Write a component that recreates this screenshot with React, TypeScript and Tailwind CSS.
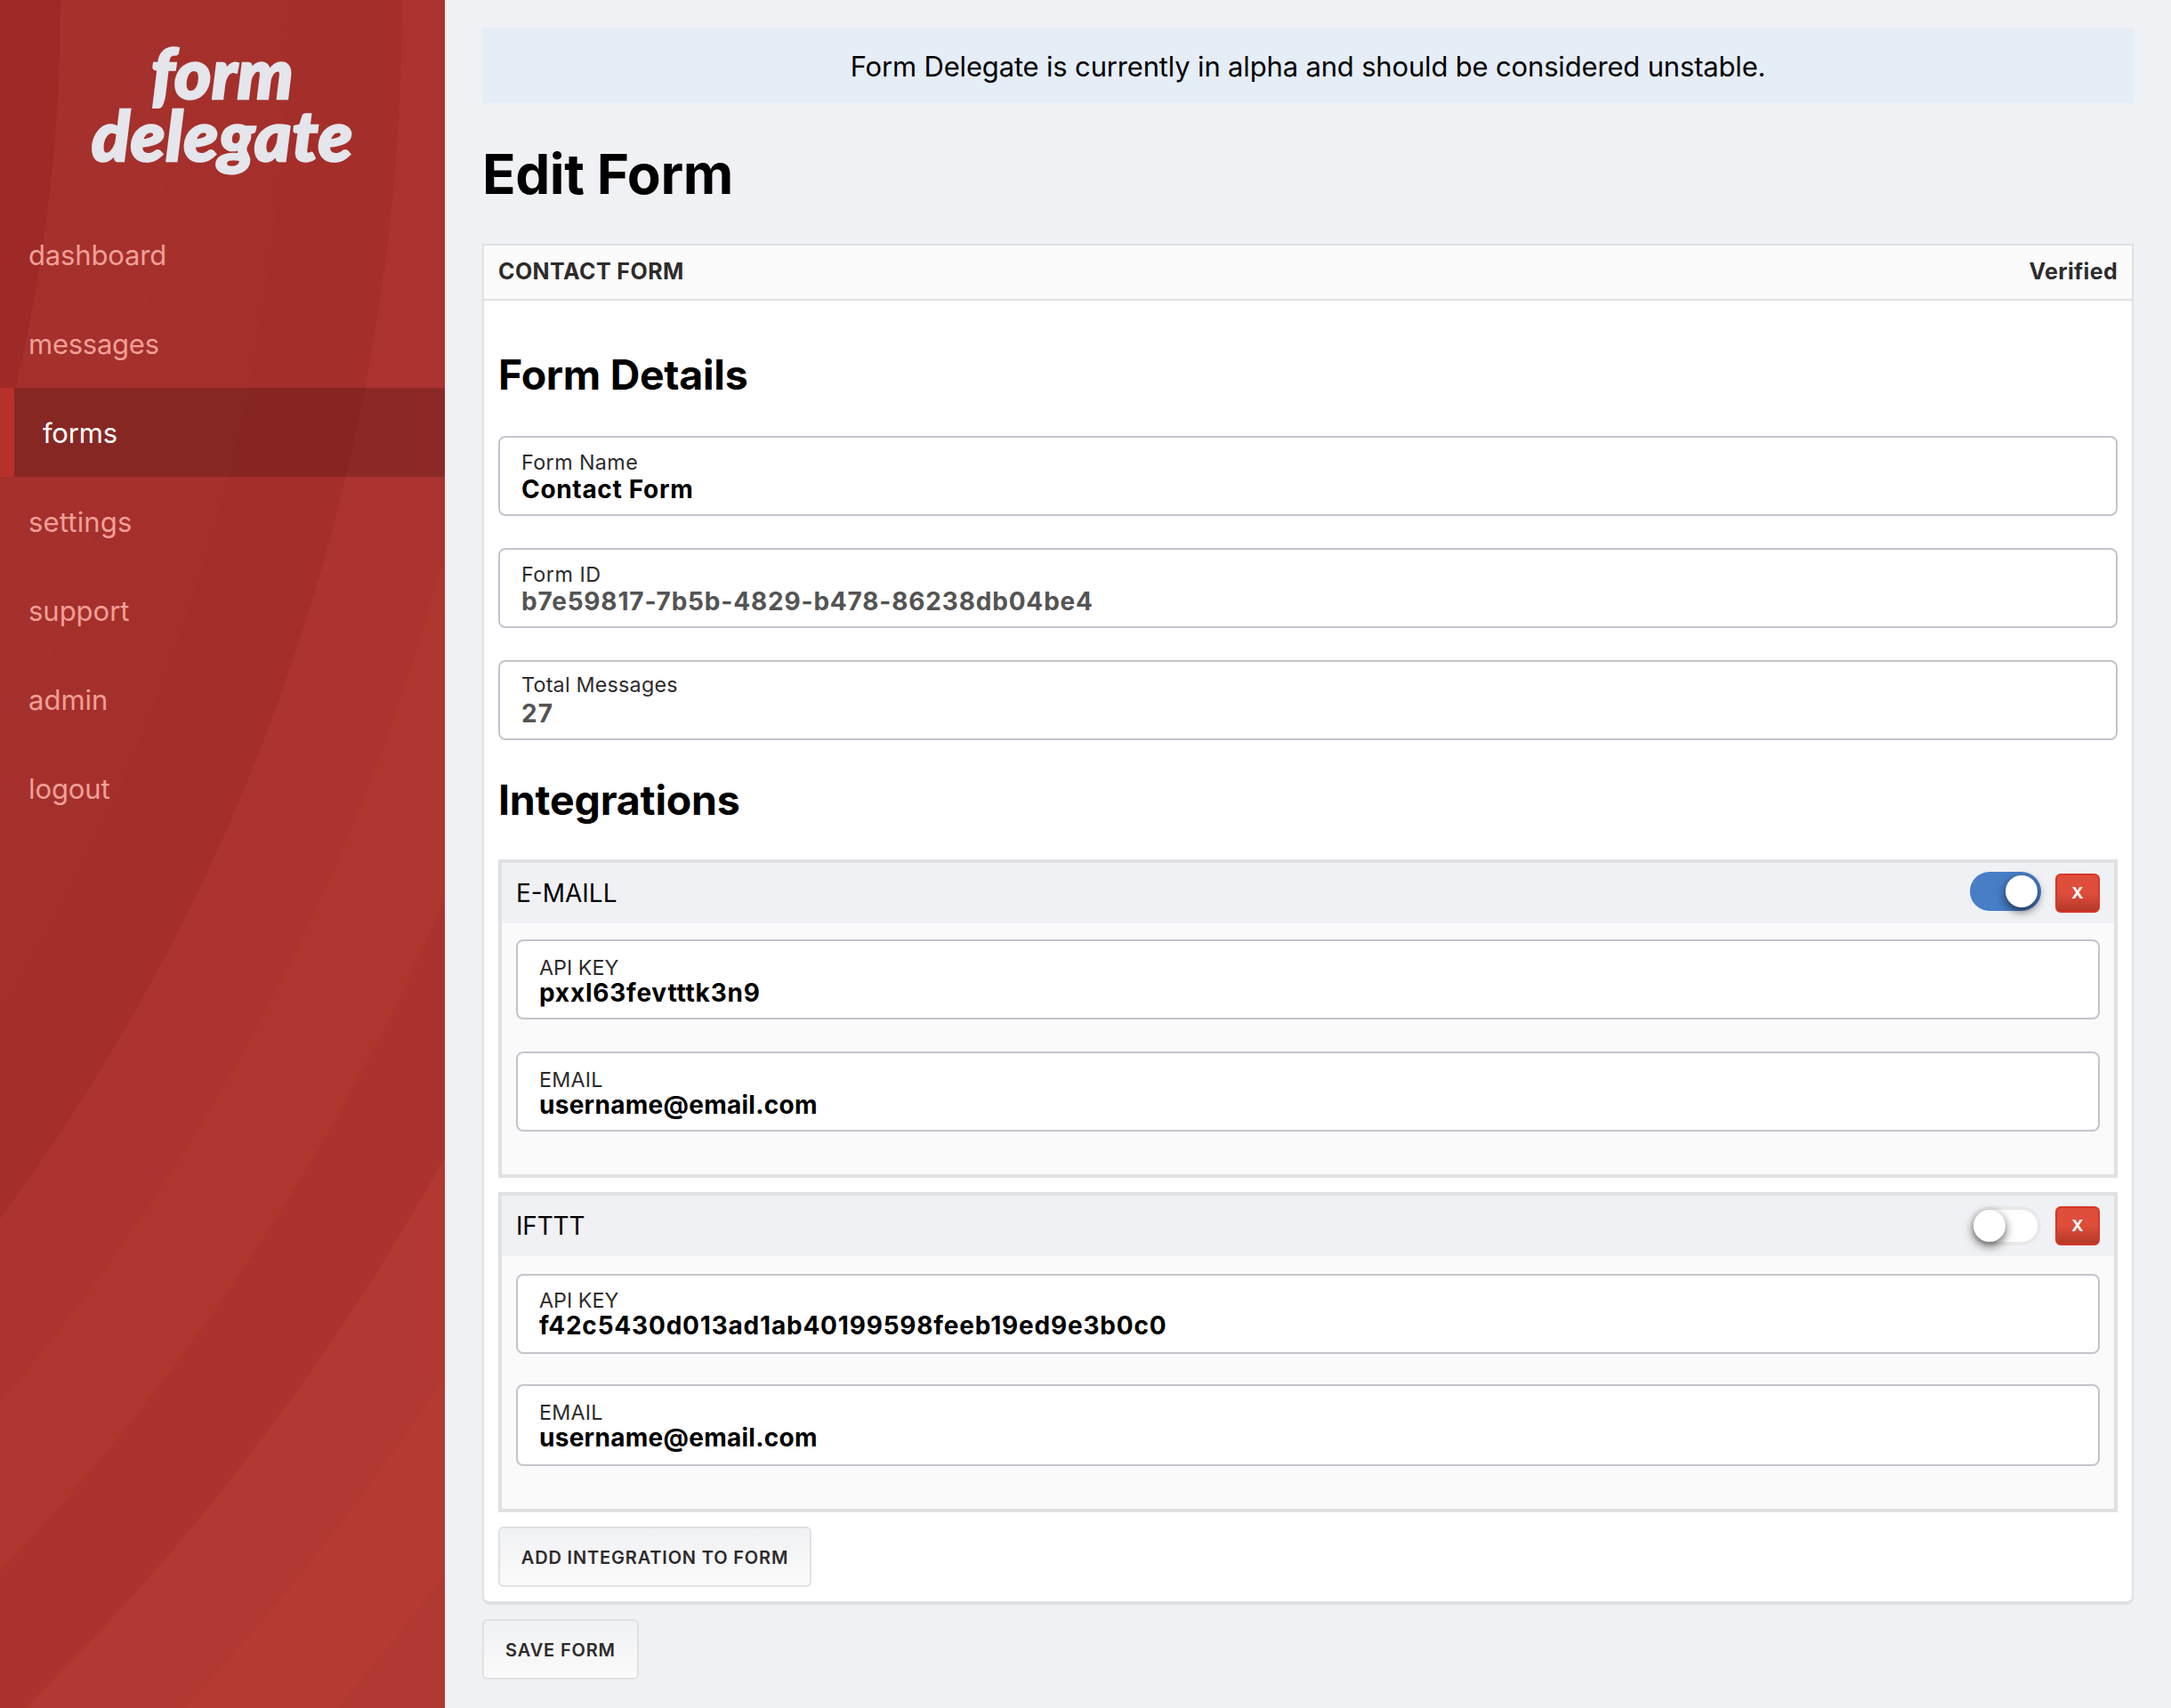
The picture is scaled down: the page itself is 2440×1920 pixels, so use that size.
import React from "react";

const rings: [number, string][] = [
  [3070, "#b03931"],
  [2942, "#b43a32"],
  [2814, "#b13931"],
  [2686, "#aa332f"],
  [2558, "#ad362e"],
  [2430, "#ab3330"],
  [2302, "#a42e2a"],
  [2174, "#a5302b"],
  [2046, "#a5302c"],
  [1918, "#9f2926"],
];

const navItems: { label: string; tracking: string }[] = [
  { label: "dashboard", tracking: "tracking-[-0.15px]" },
  { label: "messages", tracking: "tracking-[-0.25px]" },
  { label: "forms", tracking: "tracking-[-0.2px]" },
  { label: "settings", tracking: "tracking-[0.17px]" },
  { label: "support", tracking: "tracking-[-0.02px]" },
  { label: "admin", tracking: "tracking-[0px]" },
  { label: "logout", tracking: "tracking-[-0.1px]" },
];

function Sidebar() {
  return (
    <aside className="relative w-[500px] shrink-0 overflow-hidden bg-[#b03931]">
      <svg className="absolute inset-0" width="500" height="1920" viewBox="0 0 500 1920" aria-hidden="true">
        {rings.map(([r, fill]) => (
          <circle key={r} cx={-1850} cy={0} r={r} fill={fill} />
        ))}
      </svg>
      <div className="relative">
        <div className="pt-[46px] pb-[50px] text-center font-['Lato',sans-serif] text-[79px] leading-[70px] font-black text-[#e4e6ec] italic [-webkit-text-stroke:2.6px_#e4e6ec]">
          <div className="tracking-[0.6px]">form</div>
          <div className="tracking-[0.8px]">delegate</div>
        </div>
        <nav className="flex flex-col">
          {navItems.map(({ label, tracking }) => (
            <a
              key={label}
              className={
                (label === "forms"
                  ? "border-l-16 border-[#b9302b] bg-[#000]/18 bg-clip-padding text-white "
                  : "text-[#f19f97] ") +
                "h-[100px] pl-8 text-[31px] leading-[102px] " +
                tracking
              }
            >
              {label}
            </a>
          ))}
        </nav>
      </div>
    </aside>
  );
}

type FieldProps = {
  label: string;
  value: string;
  labelTracking: string;
  valueTracking: string;
  muted?: boolean;
  size?: string;
  pad?: string;
  gap?: string;
};

function Field({
  label,
  value,
  labelTracking,
  valueTracking,
  muted = false,
  size = "h-[90px]",
  pad = "pt-[15px]",
  gap = "mt-[2px]",
}: FieldProps) {
  return (
    <div className={"rounded-lg border-2 border-[#c2c5cd] bg-white pl-6 " + size + " " + pad}>
      <div className={"h-[26px] text-[23.3px] leading-[26px] text-[#2d2b2c] " + labelTracking}>{label}</div>
      <div
        className={
          "h-[30px] text-[28px] leading-[30px] font-bold " +
          (muted ? "text-[#545454] " : "text-black ") +
          gap +
          " " +
          valueTracking
        }
      >
        {value}
      </div>
    </div>
  );
}

function Toggle({ on }: { on: boolean }) {
  return (
    <div
      className={
        "flex h-11 w-20 rounded-full p-1 " +
        (on ? "justify-end bg-[#487ec8]" : "justify-start bg-white shadow-[inset_0_0_0_4px_#e8e8e8]")
      }
    >
      <div className="size-9 rounded-full bg-white shadow-[0_4px_11px_rgba(0,0,0,0.65)]" />
    </div>
  );
}

function Integration({
  title,
  tracking,
  on,
  className,
  children,
}: {
  title: string;
  tracking: string;
  on: boolean;
  className: string;
  children: React.ReactNode;
}) {
  return (
    <section className={"border-4 border-[#e0e1e3] bg-[#fafafa] " + className}>
      <header className="flex h-[68px] items-start justify-between bg-[#f0f1f4] pr-4 pl-4">
        <h3 className={"text-[28px] leading-[69px] text-black " + tracking}>{title}</h3>
        <div className="flex items-start gap-4">
          <div className={on ? "pt-2.5" : "pt-3"}>
            <Toggle on={on} />
          </div>
          <button className="mt-3 h-11 w-[50px] rounded-md border-2 border-[#d63727] bg-linear-to-b from-[#df4d3b] from-50% to-[#b53828] text-[18px] leading-[38px] font-bold text-white">
            X
          </button>
        </div>
      </header>
      {children}
    </section>
  );
}

function Button({ children, className }: { children: React.ReactNode; className: string }) {
  return (
    <button
      className={
        "block h-[68px] rounded-md border-2 border-[#e0e1e3] bg-linear-to-b from-[#f0f1f3] to-[#fbfbfb] pt-px text-[20px] leading-[65px] font-semibold text-[#2d2b2c] " +
        className
      }
    >
      {children}
    </button>
  );
}

export default function App() {
  return (
    <div className="flex h-[1920px] w-[2440px] overflow-hidden bg-[#f0f1f4] font-['Inter',sans-serif]">
      <Sidebar />
      <main className="min-w-0 flex-1 pt-8 pr-[42px] pl-[42px]">
        <div className="h-[84px] bg-[#e5edf7] text-center text-[31px] leading-[85px] tracking-[-0.17px] text-black">
          Form Delegate is currently in alpha and should be considered unstable.
        </div>
        <h1 className="mt-[44px] mb-[42px] text-[62px] leading-[72px] font-bold tracking-[-0.45px] text-black">
          Edit Form
        </h1>

        <div className="h-[1530px] rounded-b-lg border-2 border-b-4 border-[#e0e1e3] bg-white">
          <header className="flex h-[62px] justify-between border-b-2 border-[#e0e1e3] bg-[#fbfbfb] px-4 text-[25px] leading-[58px] font-bold text-[#2d2b2c]">
            <span className="tracking-[0.42px]">CONTACT FORM</span>
            <span className="tracking-[0.33px]">Verified</span>
          </header>

          <div className="px-4">
            <h2 className="pt-[53px] pb-[39px] text-[46.5px] leading-[60px] font-bold tracking-[-0.3px] text-black">
              Form Details
            </h2>
            <div className="flex flex-col gap-9">
              <Field
                label="Form Name"
                value="Contact Form"
                labelTracking="tracking-[0.4px]"
                valueTracking="tracking-[0.68px]"
              />
              <Field
                label="Form ID"
                value="b7e59817-7b5b-4829-b478-86238db04be4"
                labelTracking="tracking-[0.5px]"
                valueTracking="tracking-[0.82px]"
                muted
              />
              <Field
                label="Total Messages"
                value="27"
                labelTracking="tracking-[0.22px]"
                valueTracking="tracking-[1px]"
                pad="pt-[13px]"
                gap="mt-[4px]"
                muted
              />
            </div>

            <h2 className="py-[37px] text-[46.5px] leading-[60px] font-bold tracking-[-0.2px] text-black">
              Integrations
            </h2>

            <Integration title="E-MAILL" tracking="tracking-[0px]" on className="h-[358px]">
              <div className="flex flex-col gap-9 px-4 pt-[18px]">
                <Field
                  label="API KEY"
                  value="pxxl63fevtttk3n9"
                  labelTracking="tracking-[0px]"
                  valueTracking="tracking-[0.78px]"
                  pad="pt-[17px]"
                  gap="mt-0"
                />
                <Field
                  label="EMAIL"
                  value="username@email.com"
                  labelTracking="tracking-[0.2px]"
                  valueTracking="tracking-[0.27px]"
                  pad="pt-[17px]"
                  gap="mt-0"
                />
              </div>
            </Integration>

            <Integration title="IFTTT" tracking="tracking-[-0.17px]" on={false} className="mt-4 h-[360px]">
              <div className="flex flex-col gap-[34px] px-4 pt-5">
                <Field
                  label="API KEY"
                  value="f42c5430d013ad1ab40199598feeb19ed9e3b0c0"
                  labelTracking="tracking-[0px]"
                  valueTracking="tracking-[0.8px]"
                  pad="pt-[15px]"
                  gap="mt-0"
                />
                <Field
                  label="EMAIL"
                  value="username@email.com"
                  labelTracking="tracking-[0.2px]"
                  valueTracking="tracking-[0.27px]"
                  size="h-[92px]"
                  pad="pt-[17px]"
                  gap="mt-0"
                />
              </div>
            </Integration>

            <Button className="mt-4 w-[352px] tracking-[0.83px]">ADD INTEGRATION TO FORM</Button>
          </div>
        </div>

        <Button className="mt-4 w-[176px] tracking-[0.85px]">SAVE FORM</Button>
      </main>
    </div>
  );
}
